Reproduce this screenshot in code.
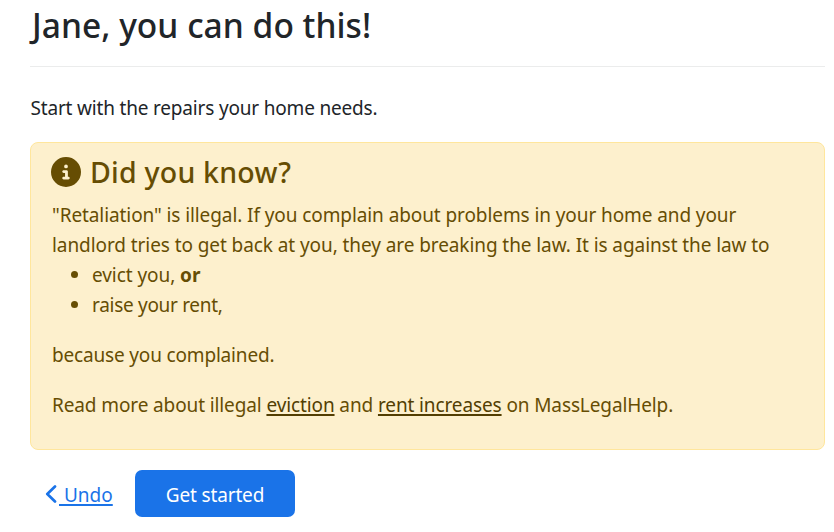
<script>
  const resources = [
    { label: 'eviction', href: '#eviction' },
    { label: 'rent increases', href: '#rent-increases' }
  ];
</script>

<main>
  <h1>Jane, you can do this!</h1>
  <hr />
  <p class="intro">Start with the repairs your home needs.</p>

  <section class="alert">
    <h2>
      <svg class="info" viewBox="0 0 512 512" aria-hidden="true">
        <path fill="currentColor" d="M256 512A256 256 0 1 0 256 0a256 256 0 1 0 0 512zM216 336h24V272H216c-13.3 0-24-10.7-24-24s10.7-24 24-24h48c13.3 0 24 10.7 24 24v88h8c13.3 0 24 10.7 24 24s-10.7 24-24 24H216c-13.3 0-24-10.7-24-24s10.7-24 24-24zm40-208a32 32 0 1 1 0 64 32 32 0 1 1 0-64z" />
      </svg>
      <span>Did you know?</span>
    </h2>
    <p class="fact"><span class="line first">"Retaliation" is illegal. If you complain about problems in your home and your</span>
      <span class="line second">landlord tries to get back at you, they are breaking the law. It is against the law to</span></p>
    <ul>
      <li>evict you, <strong>or</strong></li>
      <li class="rent">raise your rent,</li>
    </ul>
    <p class="because">because you complained.</p>
    <p class="more">Read more about illegal <a href={resources[0].href}>{resources[0].label}</a> and <a href={resources[1].href}>{resources[1].label}</a> on MassLegalHelp.</p>
  </section>

  <div class="actions">
    <button class="undo" type="button">
      <svg viewBox="0 0 12 18" aria-hidden="true">
        <path d="M10 1.5 2.3 9l7.7 7.5" fill="none" stroke="currentColor" stroke-width="2.7" stroke-linecap="round" stroke-linejoin="round" />
      </svg><span>&nbsp;Undo</span>
    </button>
    <button class="primary" type="button">Get started</button>
  </div>
</main>

<style>
  :global(body) {
    background: #fff;
    overflow: hidden;
  }
  main {
    box-sizing: border-box;
    height: 532px;
    padding: 4px 9px 0 30px;
    color: #212529;
    font: 400 19px/30px 'Segoe UI', 'Noto Sans', 'Open Sans', sans-serif;
    white-space: nowrap;
  }
  h1, h2, p, ul, hr {
    margin: 0;
  }
  h1 {
    padding-left: 2px;
    font-size: 33.5px;
    font-weight: 500;
    line-height: 42px;
    letter-spacing: 0.03px;
  }
  hr {
    height: 1px;
    margin: 20px 0 26px;
    border: 0;
    background: #ebecec;
  }
  .intro {
    padding-left: 0.5px;
    letter-spacing: -0.18px;
  }
  .alert {
    box-sizing: border-box;
    height: 308px;
    margin-top: 19px;
    padding: 10px 21px 0;
    border: 1px solid #ffe69c;
    border-radius: 8px;
    background: #fdf0cd;
    color: #664d03;
  }
  h2 {
    display: flex;
    align-items: center;
    gap: 9px;
    height: 38px;
    margin-bottom: 9px;
    font-size: 28.5px;
    font-weight: 500;
    letter-spacing: 0.22px;
  }
  .info {
    width: 30px;
    height: 30px;
    margin-left: -1px;
  }
  .line {
    display: block;
  }
  .first {
    letter-spacing: -0.09px;
  }
  .second {
    letter-spacing: -0.08px;
  }
  ul {
    margin-bottom: 20px;
    padding-left: 40px;
    letter-spacing: -0.06px;
  }
  li::marker {
    font-size: 20px;
  }
  .rent {
    letter-spacing: -0.3px;
  }
  .because {
    margin-bottom: 20px;
    letter-spacing: -0.17px;
  }
  .more {
    letter-spacing: -0.115px;
  }
  a {
    color: #523e02;
    text-decoration-thickness: 2px;
    text-underline-offset: 2px;
    text-decoration-skip-ink: none;
  }
  .actions {
    display: flex;
    margin-top: 20px;
  }
  button {
    height: 47px;
    padding: 0;
    border: 0;
    font: inherit;
  }
  .undo {
    display: flex;
    align-items: center;
    width: 105px;
    padding-left: 15px;
    background: none;
    color: #1a73e8;
  }
  .undo svg {
    width: 12px;
    height: 18px;
    margin-right: 2px;
  }
  .undo span {
    margin-top: 2px;
    text-decoration: underline 2px;
    text-underline-offset: 2px;
  }
  .primary {
    width: 160px;
    padding-top: 2px;
    border-radius: 7px;
    background: #1a73e8;
    color: #fff;
    letter-spacing: -0.15px;
  }
</style>
